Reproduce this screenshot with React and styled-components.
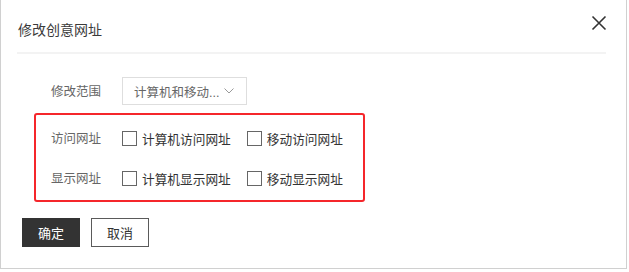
import styled, { createGlobalStyle } from 'styled-components';

const GlobalStyle = createGlobalStyle`
  html, body {
    margin: 0;
    padding: 0;
    background: #fff;
  }
  body {
    font-family: "Liberation Sans", "Noto Sans CJK SC", sans-serif;
  }
`;

const Dialog = styled.div`
  box-sizing: border-box;
  width: 627px;
  height: 269px;
  border: 1px solid #d0d0d0;
  border-top: none;
  background: #fff;
  display: flex;
  flex-direction: column;
`;

const Header = styled.div`
  display: flex;
  align-items: center;
  justify-content: space-between;
  height: 52px;
  margin: 0 20px 0 16px;
  border-bottom: 2px solid #f3f3f3;
  box-sizing: content-box;
`;

const Title = styled.h2`
  margin: 0;
  padding: 6px 0 0 1px;
  font-size: 14px;
  font-weight: normal;
  color: #3a3a3a;
`;

const CloseButton = styled.button`
  border: none;
  background: none;
  padding: 0;
  margin-top: -6px;
  margin-right: -1px;
  width: 16px;
  height: 16px;
  display: flex;
  cursor: pointer;
`;

const Body = styled.div`
  padding: 23px 0 0 33px;
  display: flex;
  flex-direction: column;
`;

const Row = styled.div`
  display: flex;
  align-items: center;
  height: ${(p) => p.$h || 20}px;
`;

const Label = styled.span`
  box-sizing: border-box;
  width: ${(p) => p.$w || 71}px;
  flex: none;
  font-size: 12.5px;
  color: #666;
  padding-left: ${(p) => p.$indent || 0}px;
  margin-top: -2px;
`;

const Select = styled.div`
  box-sizing: border-box;
  width: 125px;
  height: 28px;
  border: 1px solid #dedede;
  display: flex;
  align-items: center;
  justify-content: space-between;
  padding: 0 12px 0 11px;
  font-size: 12.5px;
  color: #666;
  white-space: nowrap;
`;

const Highlight = styled.div`
  box-sizing: border-box;
  width: 331px;
  margin-top: 8px;
  border: 2px solid #f5262b;
  border-radius: 3px;
  padding: 13px 0 12px 15px;
  display: flex;
  flex-direction: column;
  gap: 20px;
`;

const Check = styled.label`
  display: flex;
  align-items: center;
  gap: 5px;
  font-size: 12.7px;
  color: #333;
  margin-right: 16px;
`;

const Box = styled.span`
  box-sizing: border-box;
  width: 15px;
  height: 15px;
  border: 1px solid #666;
  background: #fff;
  flex: none;
`;

const Footer = styled.div`
  display: flex;
  gap: 11px;
  padding: 16px 0 0 21px;
`;

const Button = styled.button`
  box-sizing: border-box;
  width: 58px;
  height: 29px;
  font-family: inherit;
  font-size: 13px;
  padding: 0;
  cursor: pointer;
  border: 1px solid ${(p) => (p.$primary ? '#333' : '#5a5a5a')};
  background: ${(p) => (p.$primary ? '#333' : '#fff')};
  color: ${(p) => (p.$primary ? '#fff' : '#333')};
`;

const rows = [
  { label: '访问网址', items: ['计算机访问网址', '移动访问网址'] },
  { label: '显示网址', items: ['计算机显示网址', '移动显示网址'] },
];

export default function App() {
  return (
    <>
      <GlobalStyle />
      <Dialog>
        <Header>
          <Title>修改创意网址</Title>
          <CloseButton aria-label="关闭">
            <svg width="16" height="16" viewBox="0 0 16 16">
              <path d="M1.5 1.5 L14.5 14.5 M14.5 1.5 L1.5 14.5" stroke="#333" strokeWidth="1.6" fill="none" />
            </svg>
          </CloseButton>
        </Header>
        <Body>
          <Row $h={28}>
            <Label $indent={17} $w={88}>修改范围</Label>
            <Select>
              <span>计算机和移动...</span>
              <svg width="10" height="6" viewBox="0 0 10 6">
                <path d="M0.5 0.5 L5 5 L9.5 0.5" stroke="#999" strokeWidth="1" fill="none" />
              </svg>
            </Select>
          </Row>
          <Highlight>
            {rows.map((r) => (
              <Row key={r.label}>
                <Label>{r.label}</Label>
                {r.items.map((t) => (
                  <Check key={t}>
                    <Box />
                    {t}
                  </Check>
                ))}
              </Row>
            ))}
          </Highlight>
        </Body>
        <Footer>
          <Button $primary>确定</Button>
          <Button>取消</Button>
        </Footer>
      </Dialog>
    </>
  );
}
